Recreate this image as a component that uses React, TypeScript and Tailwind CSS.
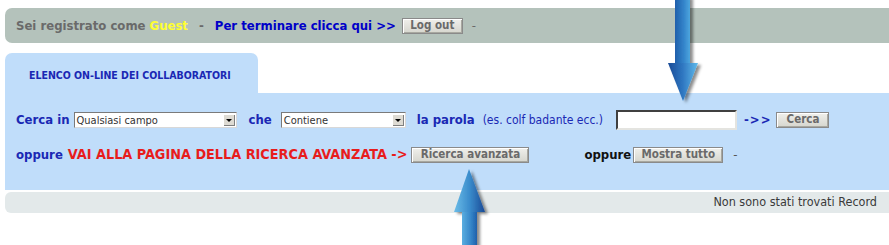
import React from 'react';

function OldButton({ label, w }: { label: string; w: string }) {
  return (
    <button
      className={`${w} h-[16px] flex items-center justify-center border border-[#8a8a8a] bg-gradient-to-b from-[#f0f0ec] to-[#d6d6ce] shadow-[inset_1px_1px_0_#ffffff,inset_-1px_-1px_0_#a8a8a0] text-[11.5px] font-bold text-[#6a6a6a] leading-none`}
    >
      {label}
    </button>
  );
}

function OldSelect({ value, w }: { value: string; w: string }) {
  return (
    <div className={`${w} h-[16px] flex items-center bg-white border border-[#7a7a7a] border-r-[#d8d8d8] border-b-[#d8d8d8]`}>
      <span className="flex-1 pl-[2px] text-[11px] text-[#333] font-normal leading-none">{value}</span>
      <span className="w-[12px] h-[12px] mr-[1px] flex items-center justify-center bg-[#dedbd3] shadow-[inset_1px_1px_0_#ffffff,inset_-1px_-1px_0_#808080]">
        <span className="w-0 h-0 border-l-[3px] border-r-[3px] border-t-[3px] border-l-transparent border-r-transparent border-t-black" />
      </span>
    </div>
  );
}

function Arrows() {
  return (
    <svg className="absolute inset-0 pointer-events-none" width="889" height="245" viewBox="0 0 889 245">
      <defs>
        <linearGradient id="shaftDown" x1="0" x2="1" y1="0" y2="0">
          <stop offset="0" stopColor="#1f5fab" />
          <stop offset="0.6" stopColor="#3485cb" />
          <stop offset="1" stopColor="#4ea6de" />
        </linearGradient>
        <linearGradient id="headDown" x1="0" x2="1" y1="0" y2="0">
          <stop offset="0" stopColor="#1a4a96" />
          <stop offset="0.5" stopColor="#2f78c2" />
          <stop offset="1" stopColor="#62bbea" />
        </linearGradient>
        <linearGradient id="headUp" x1="0" x2="1" y1="0" y2="0">
          <stop offset="0" stopColor="#6cbde8" />
          <stop offset="0.5" stopColor="#3a8ccc" />
          <stop offset="1" stopColor="#1a4a96" />
        </linearGradient>
        <linearGradient id="shaftUp" x1="0" x2="1" y1="0" y2="0">
          <stop offset="0" stopColor="#5aaee0" />
          <stop offset="0.6" stopColor="#3585c8" />
          <stop offset="1" stopColor="#1f5fab" />
        </linearGradient>
        <filter id="drop" x="-50%" y="-20%" width="200%" height="140%">
          <feDropShadow dx="3" dy="2" stdDeviation="1.5" floodColor="#000" floodOpacity="0.45" />
        </filter>
      </defs>
      <g filter="url(#drop)">
        <rect x="675" y="-4" width="15" height="69" fill="url(#shaftDown)" />
        <polygon points="668,63 698,63 683,101" fill="url(#headDown)" />
      </g>
      <g filter="url(#drop)">
        <rect x="462" y="208" width="15" height="45" fill="url(#shaftUp)" />
        <polygon points="469,169 485,212 454,212" fill="url(#headUp)" />
      </g>
    </svg>
  );
}

export default function App() {
  return (
    <div className="relative w-[889px] h-[245px] overflow-hidden bg-white font-['DejaVu_Sans_Condensed','DejaVu_Sans',sans-serif]">
      <div className="pt-[8px] pl-[5px]">
        <div className="h-[35px] bg-[#b4c2bb] rounded-l-[7px] flex items-center pl-[11px] text-[13px] font-bold text-[#6a6a6a] whitespace-nowrap">
          <span>Sei registrato come</span>
          <span className="ml-[4px] text-[#ffff33]">Guest</span>
          <span className="ml-[11px]">-</span>
          <span className="ml-[11px] text-[#0000c8]">Per terminare clicca qui &gt;&gt;</span>
          <span className="ml-[6px]">
            <OldButton label="Log out" w="w-[61px]" />
          </span>
          <span className="ml-[9px] font-normal">-</span>
        </div>

        <div className="mt-[10px] w-[253px] h-[40px] bg-[#c0ddfa] rounded-t-[7px] pl-[24px] pt-[16px] text-[10.5px] font-bold text-[#1a28b4] whitespace-nowrap leading-[12px]">
          ELENCO ON-LINE DEI COLLABORATORI
        </div>

        <div className="h-[97px] bg-[#c0ddfa] pl-[11px] pt-[17px] text-[13px] font-bold text-[#1a28b4] whitespace-nowrap">
          <div className="flex items-center h-[20px]">
            <span>Cerca in</span>
            <span className="ml-[4px]"><OldSelect value="Qualsiasi campo" w="w-[163px]" /></span>
            <span className="ml-[12px]">che</span>
            <span className="ml-[9px]"><OldSelect value="Contiene" w="w-[125px]" /></span>
            <span className="ml-[11px]">la parola</span>
            <span className="ml-[8px] font-normal text-[12px]">(es. colf badante ecc.)</span>
            <span className="ml-[13px] w-[121px] h-[20px] bg-white border-2 border-t-[#404040] border-l-[#404040] border-b-[#e4e4e0] border-r-[#e4e4e0]" />
            <span className="ml-[7px] tracking-[1px]">-&gt;&gt;</span>
            <span className="ml-[5px]"><OldButton label="Cerca" w="w-[53px]" /></span>
          </div>
          <div className="flex items-center h-[20px] mt-[15px]">
            <span>oppure</span>
            <span className="ml-[5px] text-[14.3px] text-[#e81c1c]">VAI ALLA PAGINA DELLA RICERCA AVANZATA -&gt;</span>
            <span className="ml-[4px]"><OldButton label="Ricerca avanzata" w="w-[118px]" /></span>
            <span className="ml-[55px] text-[#111]">oppure</span>
            <span className="ml-[2px]"><OldButton label="Mostra tutto" w="w-[90px]" /></span>
            <span className="ml-[10px] font-normal text-[#555]">-</span>
          </div>
        </div>

        <div className="mt-[2px] h-[21px] bg-[#e3e9ea] rounded-l-[6px] flex items-center justify-end pr-[12px] text-[12.5px] text-[#3a3a3a] whitespace-nowrap">
          Non sono stati trovati Record
        </div>
      </div>
      <Arrows />
    </div>
  );
}
